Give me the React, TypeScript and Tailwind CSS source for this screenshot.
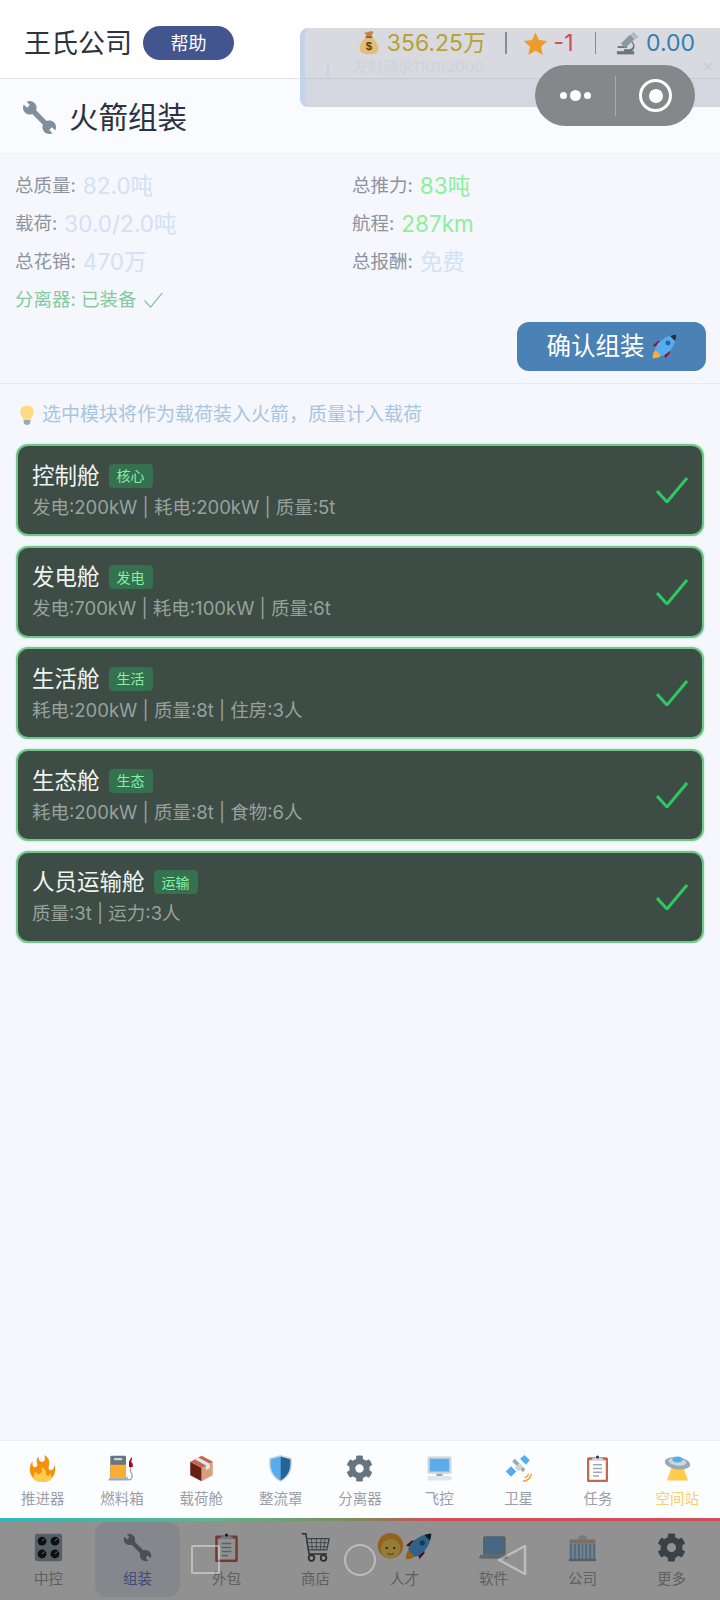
import { FaCog } from 'react-icons/fa';

type IconProps = { className?: string };

const Wrench = ({ className }: IconProps) => (
  <svg viewBox="0 0 36 36" className={className} fill="#7F8F9B">
    <path d="M4.67 1.85 L8 5.2 L5.2 8 L1.85 4.67 A7 7 0 1 0 4.67 1.85Z" />
    <path d="M31.33 34.15 L28 30.8 L30.8 28 L34.15 31.33 A7 7 0 1 0 31.33 34.15Z" />
    <path d="M10 10 L26 26" stroke="#7F8F9B" strokeWidth="5.5" />
  </svg>
);

const Rocket = ({ className }: IconProps) => (
  <svg viewBox="0 0 36 36" className={className}>
    <path d="M1 17l8-7 16 1 1 16-7 8s0-6-6-12-12-6-12-6z" fill="#A0041E" />
    <path d="M1 35s0-8 3-11 11-3 11-3 0 8-3 11-11 3-11 3z" fill="#FFAC33" />
    <path d="M24 26c-4 4-10 6-10 6L4 22s2-6 6-10C15 7 25 1 35 1c0 10-6 20-11 25z" fill="#55ACEE" />
    <path d="M35 1c-3 0-6 .6-9 2l7 7c1.4-3 2-6 2-9z" fill="#292F33" />
    <circle cx="23" cy="13" r="3.5" fill="#269" />
  </svg>
);

const MoneyBag = ({ className }: IconProps) => (
  <svg viewBox="0 0 36 36" className={className}>
    <path d="M14 9C8 14 3 21 4 27c1 7 7 8 14 8s13-1 14-8c1-6-4-13-10-18z" fill="#E3BE78" />
    <path d="M11 1c3 1.500 4 1 7 0s5 0 7 0l-4 8h-6z" fill="#C8824A" />
    <rect x="13" y="8" width="10" height="2.500" fill="#8A5A2B" />
    <text x="18" y="29" textAnchor="middle" fontSize="17" fontWeight="700" fill="#4F3F18" fontFamily="Liberation Sans, sans-serif">$</text>
  </svg>
);

const Star = ({ className }: IconProps) => (
  <svg viewBox="0 0 36 36" className={className}>
    <path d="M18 2l5 11 12 1.500-9 8 2.500 12L18 28.500 7.500 34.500 10 22.500l-9-8L13 13z" fill="#EE9B2E" />
  </svg>
);

const Microscope = ({ className }: IconProps) => (
  <svg viewBox="0 0 36 36" className={className}>
    <path d="M3 30h27v5H3z" fill="#66757F" />
    <path d="M24 12c5 3 8 8 6 14-1 3-4 5-8 5h-8v-4h8c3 0 5-2 6-4 1-4-1-7-5-9z" fill="#66757F" />
    <path d="M4 22h15v3H4z" fill="#66757F" />
    <path d="M9 18L24 4l7 7-15 14z" fill="#8899A6" />
    <path d="M25 3l4-3 7 7-3 4z" fill="#AAB8C2" />
  </svg>
);

const Bulb = ({ className }: IconProps) => (
  <svg viewBox="0 0 36 36" className={className}>
    <path d="M18 1C11 1 6 6 6 13c0 6 5 9 6 15h12c1-6 6-9 6-15 0-7-5-12-12-12z" fill="#FFD983" />
    <path d="M12 27h12v5c0 2-3 4-6 4s-6-2-6-4z" fill="#99AAB5" />
  </svg>
);

const Fire = ({ className }: IconProps) => (
  <svg viewBox="0 0 36 36" className={className}>
    <path d="M35 19c0-2-.4-4-1-5.900-.5 5.400-3.300 8.200-6.300 6.900-2.800-1.200-.9-5.900-.8-8.200.2-3.800 0-8.200-6.900-11.800 2.900 5.500.3 8.900-2.300 9.100-3 .2-5.700-2.500-4.700-7-3.200 2.400-3.300 6.400-2.300 9 1 2.700 0 5-2.600 5.200-2.800.3-4.400-3-3-8.300C2.500 11 1 14.800 1 19c0 9.400 7.600 17 17 17s17-7.600 17-17z" fill="#F4900C" />
    <path d="M28.400 24c.1 3.100-2.600 4.300-4 3.700-2.100-.8-1.500-2.300-2.100-5.300s-2.600-5.100-5.700-6c2.300 6.300-1.200 8.700-3.100 9.100-1.900.4-3.700 0-4-4C7.400 23.700 6 26.700 6 29.500 6 33.500 10 36 18 36s12-2.500 12-6.500c0-1.500-1-4.500-1.600-5.500z" fill="#FFCC4D" />
  </svg>
);

const FuelPump = ({ className }: IconProps) => (
  <svg viewBox="0 0 36 36" className={className}>
    <rect x="3" y="1" width="21" height="30" rx="1.500" fill="#66757F" />
    <rect x="8" y="4" width="11" height="3" rx="1" fill="#CCD6DD" />
    <rect x="3" y="13" width="21" height="18" fill="#FFAC33" />
    <rect x="1" y="31" width="25" height="3" fill="#99AAB5" />
    <path d="M28 9l3-6 1 1-1 5 2 3v4h-5z" fill="#A0041E" />
    <path d="M30 16v6c3 3 3 10-1 11-3 .5-4-2-4-4" fill="none" stroke="#99AAB5" strokeWidth="1.800" />
  </svg>
);

const Box = ({ className }: IconProps) => (
  <svg viewBox="0 0 36 36" className={className}>
    <path d="M18 1L33 9v18l-15 8z" fill="#D99E82" />
    <path d="M18 17L3 9v18l15 8z" fill="#662113" />
    <path d="M18 1L3 9l15 8 15-8z" fill="#C1694F" />
    <path d="M9 5.800l15 8.200 5-2.500-15-8.200z" fill="#E1E8ED" />
    <path d="M24 14l5-2.500v6l-5 2.500z" fill="#E1E8ED" />
  </svg>
);

const Shield = ({ className }: IconProps) => (
  <svg viewBox="0 0 36 36" className={className}>
    <path d="M18 0L3 4c-1 12 0 24 15 32 15-8 16-20 15-32z" fill="#CCD6DD" />
    <path d="M18 2L5 5.500c-1 11 .5 21 13 28.500z" fill="#55ACEE" />
    <path d="M18 2l13 3.500c1 11-.5 21-13 28.500z" fill="#226699" />
  </svg>
);

const Desktop = ({ className }: IconProps) => (
  <svg viewBox="0 0 36 36" className={className}>
    <rect x="2" y="2" width="32" height="23" rx="2" fill="#CCD6DD" />
    <rect x="5" y="5" width="26" height="17" fill="#5DADEC" />
    <rect x="14" y="25" width="8" height="3" fill="#99AAB5" />
    <rect x="2" y="28" width="32" height="6" rx="1.500" fill="#E1E8ED" />
  </svg>
);

const Satellite = ({ className }: IconProps) => (
  <svg viewBox="0 0 36 36" className={className}>
    <path d="M1 22l7-7 7 7-7 7z" fill="#55ACEE" />
    <path d="M20 5l6-5 7 7-5 6z" fill="#55ACEE" />
    <path d="M11 7l2-2 14 14-3 4-14-14z" fill="#99AAB5" />
    <path d="M13 17l6-6 5 5-6 6z" fill="#CCD6DD" />
    <path d="M26 30a5 5 0 0 0 5-5M24 35c6 0 11-5 11-10" fill="none" stroke="#F4A73B" strokeWidth="2" />
  </svg>
);

const Clipboard = ({ className }: IconProps) => (
  <svg viewBox="0 0 36 36" className={className}>
    <rect x="4" y="3" width="28" height="33" rx="2" fill="#C1694F" />
    <rect x="7" y="7" width="22" height="26" fill="#FFFFFF" />
    <path d="M12 13h12M12 18h12M12 23h12M12 28h8" stroke="#99AAB5" strokeWidth="1.800" />
    <path d="M10 7c0-3 3-3 5-3 0-3 6-3 6 0 2 0 5 0 5 3z" fill="#CCD6DD" />
    <circle cx="18" cy="2.500" r="2" fill="#292F33" />
  </svg>
);

const Ufo = ({ className }: IconProps) => (
  <svg viewBox="0 0 36 36" className={className}>
    <path d="M10 17h16l6 17H4z" fill="#FFCC4D" />
    <ellipse cx="18" cy="11" rx="17" ry="8" fill="#99AAB5" transform="rotate(8 18 11)" />
    <ellipse cx="18" cy="9" rx="12" ry="5" fill="#CCD6DD" transform="rotate(8 18 9)" />
    <ellipse cx="18" cy="6" rx="7" ry="4" fill="#55ACEE" />
  </svg>
);

const Panel = ({ className }: IconProps) => (
  <svg viewBox="0 0 36 36" className={className}>
    <rect x="1" y="1" width="34" height="34" rx="3" fill="#99AAB5" />
    {[10, 26].map((y) =>
      [10, 26].map((x) => (
        <g key={`${x}-${y}`}>
          <circle cx={x} cy={y} r="5.500" fill="#1A1D20" />
          <path d={`M${x} ${y}l3-3`} stroke="#CCD6DD" strokeWidth="1.200" />
        </g>
      ))
    )}
  </svg>
);

const Cart = ({ className }: IconProps) => (
  <svg viewBox="0 0 36 36" className={className}>
    <path d="M1 1h5l4 25h22" fill="none" stroke="#4A535B" strokeWidth="1.800" />
    <path d="M7 7h28l-3 14H9z" fill="none" stroke="#66757F" strokeWidth="1.600" />
    <path d="M13 7l1 14M19 7v14M25 7l-1 14M30 7l-2 14M8 12h26M9 17h24" stroke="#66757F" strokeWidth="1.100" />
    <circle cx="13" cy="31" r="3.500" fill="none" stroke="#4A535B" strokeWidth="2.200" />
    <circle cx="28" cy="31" r="3.500" fill="none" stroke="#4A535B" strokeWidth="2.200" />
  </svg>
);

const Kid = ({ className }: IconProps) => (
  <svg viewBox="0 0 36 36" className={className}>
    <circle cx="18" cy="17" r="17" fill="#FFAC33" />
    <circle cx="18" cy="21" r="13" fill="#FFDC5D" />
    <circle cx="13" cy="20" r="1.500" fill="#662113" />
    <circle cx="23" cy="20" r="1.500" fill="#662113" />
    <path d="M14 27c2 2 6 2 8 0" fill="none" stroke="#C1694F" strokeWidth="1.500" />
  </svg>
);

const Laptop = ({ className }: IconProps) => (
  <svg viewBox="0 0 36 36" className={className}>
    <rect x="5" y="4" width="28" height="23" rx="2" fill="#99AAB5" />
    <rect x="7" y="6" width="24" height="19" fill="#7CB8E8" />
    <path d="M2 27h33l1 3c0 1-1 2-2 2H2c-1 0-2-1-2-2z" fill="#AAB8C2" />
  </svg>
);

const Building = ({ className }: IconProps) => (
  <svg viewBox="0 0 36 36" className={className}>
    <path d="M12 8c0-7 12-7 12 0z" fill="#CCD6DD" />
    <rect x="2" y="13" width="32" height="20" fill="#8CC4EE" />
    <path d="M2 8h32v5H2z" fill="#D9C3B0" />
    <path d="M6 13v20M11 13v20M16 13v20M20 13v20M25 13v20M30 13v20" stroke="#E1E8ED" strokeWidth="2" />
    <rect x="1" y="32" width="34" height="3" fill="#99AAB5" />
  </svg>
);

const GearIcon = ({ className }: IconProps) => <FaCog className={className} color="#66757F" />;

const Check = ({ className, width = '2.400' }: IconProps & { width?: string }) => (
  <svg viewBox="0 0 32 26" className={className} fill="none" stroke="currentColor" strokeWidth={width}>
    <path d="M1 14l10 11L31 1" />
  </svg>
);

const modules = [
  { name: '控制舱', tag: '核心', desc: '发电:200kW | 耗电:200kW | 质量:5t' },
  { name: '发电舱', tag: '发电', desc: '发电:700kW | 耗电:100kW | 质量:6t' },
  { name: '生活舱', tag: '生活', desc: '耗电:200kW | 质量:8t | 住房:3人' },
  { name: '生态舱', tag: '生态', desc: '耗电:200kW | 质量:8t | 食物:6人' },
  { name: '人员运输舱', tag: '运输', desc: '质量:3t | 运力:3人' },
];

const subTabs = [
  { label: '推进器', Icon: Fire },
  { label: '燃料箱', Icon: FuelPump },
  { label: '载荷舱', Icon: Box },
  { label: '整流罩', Icon: Shield },
  { label: '分离器', Icon: GearIcon },
  { label: '飞控', Icon: Desktop },
  { label: '卫星', Icon: Satellite },
  { label: '任务', Icon: Clipboard },
  { label: '空间站', Icon: Ufo },
];

const mainTabs = [
  { label: '中控', Icon: Panel },
  { label: '组装', Icon: Wrench },
  { label: '外包', Icon: Clipboard },
  { label: '商店', Icon: Cart },
  { label: '人才', Icon: null },
  { label: '软件', Icon: Laptop },
  { label: '公司', Icon: Building },
  { label: '更多', Icon: GearIcon },
];

function Stat({ label, value, valueClass }: { label: string; value: string; valueClass: string }) {
  return (
    <div className="flex h-[38px] items-center gap-[7px]">
      <span className="text-[18.500px] text-[#8d939e]">{label}:</span>
      <span className={`text-[22.500px] ${valueClass}`}>{value}</span>
    </div>
  );
}

export default function App() {
  return (
    <div className="relative flex h-[1600px] w-[720px] flex-col overflow-hidden bg-[#f5f7fc] text-[#2b3240] [font-family:Inter,'Noto_Sans_CJK_SC',sans-serif]">
      {/* top bar */}
      <header className="flex h-[79px] shrink-0 items-center border-b border-[#e3e6f0] bg-white pl-6 pr-[25px] pt-[8px]">
        <span className="text-[27px] leading-none">王氏公司</span>
        <span className="ml-[11px] flex h-[34px] w-[91px] items-center justify-center rounded-full bg-[#43558f] text-[18px] text-white">帮助</span>
        <div className="relative z-10 ml-auto flex items-center text-[23px]">
          <MoneyBag className="h-[24px] w-[24px]" />
          <span className="ml-[6px] text-[#b9a133]">356.25万</span>
          <span className="ml-[19px] mr-[16px] h-[22px] w-[1.500px] bg-[#8a8c90]" />
          <Star className="h-[25px] w-[25px]" />
          <span className="ml-[6px] text-[#cf4a55]">-1</span>
          <span className="ml-[21px] mr-[19px] h-[22px] w-[1.500px] bg-[#8a8c90]" />
          <Microscope className="h-[23px] w-[23px]" />
          <span className="ml-2 text-[#2f7fb5]">0.00</span>
        </div>
      </header>

      <div className="flex h-[74px] shrink-0 items-center gap-3 bg-[#f9fbff] pl-[22px] pt-[3px]">
        <Wrench className="h-[35px] w-[35px]" />
        <span className="text-[29.500px] leading-none">火箭组装</span>
      </div>

      {/* summary */}
      <section className="shrink-0 border-b border-[#e8ebf2] px-[15px] pb-[12px] pt-[14px]">
        <div className="grid grid-cols-[337px_1fr]">
          <Stat label="总质量" value="82.0吨" valueClass="text-[#d3e0f5]" />
          <Stat label="总推力" value="83吨" valueClass="text-[#8cf09a]" />
          <Stat label="载荷" value="30.0/2.0吨" valueClass="text-[#d3e0f5]" />
          <Stat label="航程" value="287km" valueClass="text-[#8cf09a]" />
          <Stat label="总花销" value="470万" valueClass="text-[#d3e0f5]" />
          <Stat label="总报酬" value="免费" valueClass="text-[#d3e0f5]" />
        </div>
        <div className="flex h-[38px] items-center gap-[7px] text-[18.500px] text-[#86c9a2]">
          <span>分离器: 已装备</span>
          <Check className="h-[16px] w-[19px]" />
        </div>
        <div className="mt-[3px] flex justify-end">
          <button className="-mr-px flex h-[49px] w-[189px] items-center justify-center gap-[7px] rounded-xl bg-[#4a82b6] text-[24.500px] text-white">
            确认组装
            <Rocket className="h-[25px] w-[25px]" />
          </button>
        </div>
      </section>

      {/* module list */}
      <section className="flex-1 px-4 pt-[19px]">
        <div className="flex items-center gap-[5px] pl-px text-[19px] leading-[24px] text-[#a9c5de]">
          <Bulb className="h-[22px] w-[20px]" />
          <span>选中模块将作为载荷装入火箭，质量计入载荷</span>
        </div>
        <div className="mt-[17px] flex flex-col gap-[9.700px]">
          {modules.map((m) => (
            <div key={m.name} className="flex h-[92px] items-center justify-between rounded-xl border-2 border-[#6fc78a] bg-[#3d4c45] px-[14px] shadow-[0_0_2px_rgba(111,199,138,0.6)]">
              <div>
                <div className="flex items-center gap-[9px]">
                  <span className="text-[22.500px] leading-[30px] text-[#f0f4f2]">{m.name}</span>
                  <span className="flex h-[24px] w-[44px] items-center justify-center rounded-[4px] bg-[#35704f] text-[14px] text-[#86f0a6]">{m.tag}</span>
                </div>
                <div className="mt-[3px] text-[18.500px] leading-[26px] text-[#98a29d]">{m.desc}</div>
              </div>
              <Check className="h-[26px] w-[32px] text-[#2fc85f]" width="3" />
            </div>
          ))}
        </div>
      </section>

      {/* sub tabs */}
      <nav className="flex h-[78px] shrink-0 border-t border-[#eceef4] bg-[#fcfdff] px-[3px]">
        {subTabs.map(({ label, Icon }) => (
          <div key={label} className="flex flex-1 flex-col items-center pt-[14px]">
            <Icon className="h-[27px] w-[27px]" />
            <span className={`mt-[7px] text-[14.500px] leading-[20px] ${label === '空间站' ? 'text-[#f5cf6b]' : 'text-[#9a9ea6]'}`}>{label}</span>
          </div>
        ))}
      </nav>
      <div className="h-[3px] shrink-0 bg-[linear-gradient(90deg,#2fb8bd,#5fb58a_30%,#7c8a5a_50%,#d0505a_60%,#d0505a)]" />

      {/* main tabs, dimmed by the system nav bar */}
      <nav className="relative flex h-[79px] shrink-0 bg-white px-[4px] pb-[3px] pt-[1px]">
        {mainTabs.map(({ label, Icon }) => (
          <div key={label} className={`mx-[2px] flex flex-1 flex-col items-center rounded-xl pt-[11px] ${label === '组装' ? 'bg-[#eaedf6]' : ''}`}>
            {Icon ? (
              <Icon className="h-[29px] w-[29px]" />
            ) : (
              <div className="flex h-[29px] gap-[1px]">
                <Kid className="h-[27px] w-[27px]" />
                <Rocket className="h-[27px] w-[27px]" />
              </div>
            )}
            <span className={`mt-[7px] text-[14.500px] leading-[20px] ${label === '组装' ? 'text-[#6f86cc]' : 'text-[#a8a8a8]'}`}>{label}</span>
          </div>
        ))}
        {/* system nav overlay */}
        <div className="absolute inset-0 bg-black/43">
          <div className="absolute left-[191px] top-[24px] h-[29px] w-[29px] rounded-[2px] border-[2.500px] border-white/40" />
          <div className="absolute left-[344px] top-[23px] h-[32px] w-[32px] rounded-full border-[2.500px] border-white/40" />
          <svg viewBox="0 0 30 32" className="absolute left-[497px] top-[23px] h-[32px] w-[30px]" fill="none" stroke="rgba(255,255,255,.4)" strokeWidth="2.500">
            <path d="M2 16L28 2v28z" strokeLinejoin="round" />
          </svg>
        </div>
      </nav>

      {/* notification sheet lying under the capsule */}
      <div className="absolute left-[300px] right-0 top-[28px] h-[79px] rounded-l-lg border-l-[5px] border-[#c3d3ec] bg-[#8f95a5]/35">
        <span className="absolute left-[20px] top-[24px] text-[22px] text-[#c5d4ea]">i</span>
        <span className="absolute left-[48px] top-[28px] text-[15px] text-[#cfd2d9]">发射请求1101/2000</span>
        <span className="absolute right-[6px] top-[24px] text-[18px] text-[#c8cbd2]">×</span>
      </div>

      {/* mini program capsule */}
      <div className="absolute left-[535px] top-[65px] flex h-[61px] w-[160px] items-center rounded-full bg-[#85878a]">
        <div className="flex w-[80px] items-center justify-center gap-[3px]">
          <span className="h-[7px] w-[7px] rounded-full bg-white" />
          <span className="h-[11px] w-[11px] rounded-full bg-white" />
          <span className="h-[7px] w-[7px] rounded-full bg-white" />
        </div>
        <span className="h-[40px] w-px bg-[#a8aaad]" />
        <div className="flex flex-1 items-center justify-center">
          <span className="flex h-[33px] w-[33px] items-center justify-center rounded-full border-[3px] border-white">
            <span className="h-[14px] w-[14px] rounded-full bg-white" />
          </span>
        </div>
      </div>
    </div>
  );
}
